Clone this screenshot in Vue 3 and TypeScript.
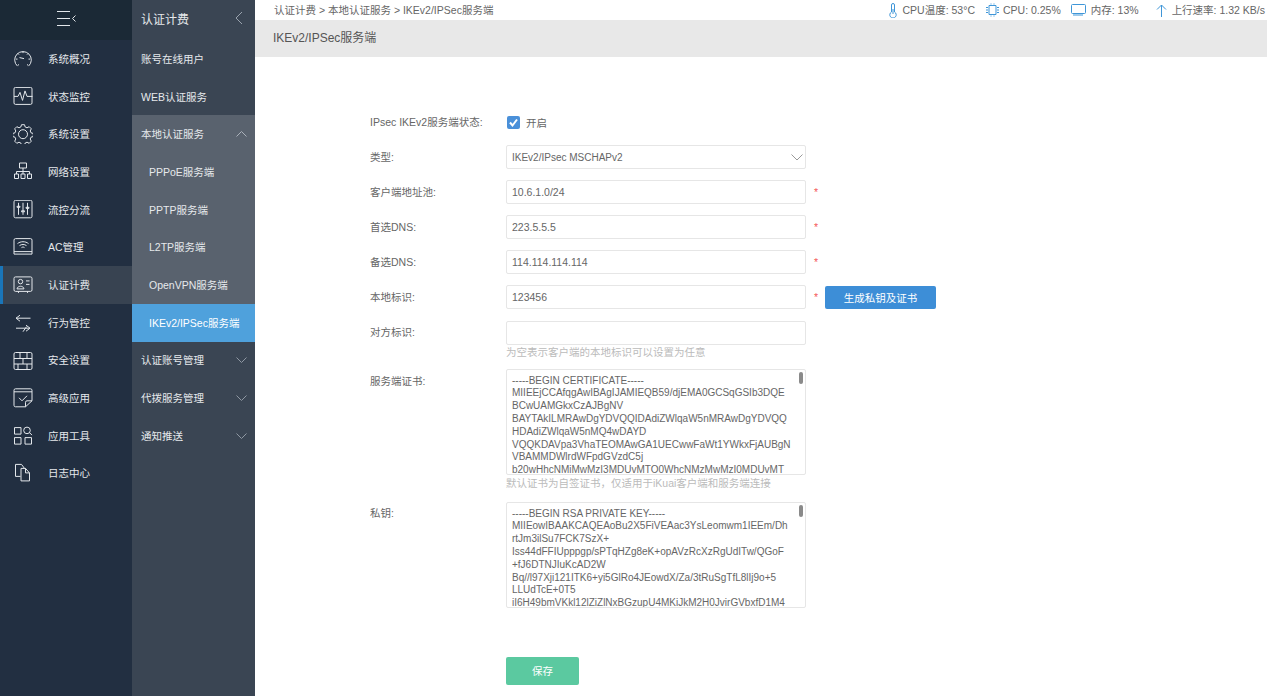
<script setup lang="ts">
interface RailItem { label: string; d: string }

const rail: RailItem[] = [
  { label: '系统概况', d: 'M17.500 66.500A8.300 8.300 0 1 1 28.500 66.500M16 59.500h1.500M28.500 59.500H30M23 52v1.500M18 54l1 1M28 54l-1 1M19.500 58l4.500 1M18 65.500l1-.5M28 65.500l-1-.5' },
  { label: '状态监控', d: 'M15.500 87.500h15a1.500 1.500 0 0 1 1.500 1.500v14a1.500 1.500 0 0 1-1.500 1.500h-15a1.500 1.500 0 0 1-1.500-1.500v-14a1.500 1.500 0 0 1 1.500-1.500zM14 96.500h4l2-4 2.500 8 2.500-9.500 2 5.500h5.500' },
  { label: '系统设置', d: 'M21.500 125.500h3l.7 2.300 1.800.8 2.200-1.100 2.100 2.100-1.100 2.200.8 1.800 2.300.7v3l-2.300.7-.8 1.800 1.100 2.200-2.100 2.100-2.200-1.100-1.800.8-.7 2.300h-3l-.7-2.300-1.800-.8-2.200 1.100-2.100-2.100 1.100-2.200-.8-1.800-2.300-.7v-3l2.300-.7.8-1.800-1.100-2.200 2.100-2.100 2.200 1.100 1.800-.8zM23 130.500a4.500 4.500 0 1 1 0 9a4.500 4.500 0 0 1 0-9z' },
  { label: '网络设置', d: 'M19.500 163.500h7v5h-7zM23 168.500v3.500M16.500 172h13M16.500 172v2.500M23 172v2.500M29.500 172v2.500M14.500 174.500h4v4.500h-4zM21 174.500h4v4.500h-4zM27.500 174.500h4v4.500h-4z' },
  { label: '流控分流', d: 'M15.500 200.500h15a1.500 1.500 0 0 1 1.500 1.500v14.500a1.500 1.500 0 0 1-1.500 1.500h-15a1.500 1.500 0 0 1-1.500-1.500V202a1.500 1.500 0 0 1 1.500-1.500zM18.500 203v12M23 203v12M27.500 203v12M17 206.500h3v1h-3zM21.500 211h3v1h-3zM26 207.500h3v1h-3z' },
  { label: 'AC管理', d: 'M15.500 239.500h15a1.500 1.500 0 0 1 1.500 1.500v14h-18v-14a1.500 1.500 0 0 1 1.500-1.500zM14 252.500h18M17.500 244.500c3-2.500 8-2.500 11 0M19.500 246.500c2-1.500 5-1.500 7 0M21.500 248.500c1-.7 2-.7 3 0' },
  { label: '认证计费', d: 'M15.500 277.500h15a1.500 1.500 0 0 1 1.500 1.500v11.500a1.500 1.500 0 0 1-1.500 1.500h-15a1.500 1.500 0 0 1-1.500-1.500V279a1.500 1.500 0 0 1 1.500-1.500zM20.500 280a2.200 2.200 0 1 1 0 4.400a2.200 2.200 0 0 1 0-4.400zM17 289.500c.5-3.500 6.500-3.500 7 0zM26 281.500h3.500M26 285h3.500M18.500 292v1.500M27.500 292v1.500' },
  { label: '行为管控', d: 'M20 315.500l-4 3 4 3M16 318.500h14.500M26 331.500l4-3-4-3M30 328.500H16M23 332l3.500-5' },
  { label: '安全设置', d: 'M15.500 353.500h15a1.500 1.500 0 0 1 1.500 1.500v14a1.500 1.500 0 0 1-1.500 1.500h-15a1.500 1.500 0 0 1-1.500-1.500v-14a1.500 1.500 0 0 1 1.500-1.500zM14 359.500h18M14 365h18M20 353.500v6M27 353.500v6M23 359.500v5.500M18 365v5.500M27 365v5.500' },
  { label: '高级应用', d: 'M25.500 407.500H15.500a1.500 1.500 0 0 1-1.500-1.500v-15a1.500 1.500 0 0 1 1.500-1.500h15a1.500 1.500 0 0 1 1.500 1.500v10.500zM14 392.500h18M25.500 407.500v-4.500a1.500 1.500 0 0 1 1.500-1.500h5M19 398.500l3 3 5-5' },
  { label: '应用工具', d: 'M14.500 428h6.500v6.500h-6.500zM14.500 438h6.500v6.500h-6.500zM25 438h6.500v6.500H25zM27 427.500a3.300 3.300 0 1 1 0 6.600a3.300 3.300 0 0 1 0-6.600zM29.500 433l2.500 2.500' },
  { label: '日志中心', d: 'M20.500 477.500h-5v-12h6l3 4M21 469.500h4.500l4 4.500v8h-8.500zM25.500 469.500v4.500h4' }
]

const certText = `-----BEGIN CERTIFICATE-----
MIIEEjCCAfqgAwIBAgIJAMIEQB59/djEMA0GCSqGSIb3DQE
BCwUAMGkxCzAJBgNV
BAYTAkILMRAwDgYDVQQIDAdiZWlqaW5nMRAwDgYDVQQ
HDAdiZWlqaW5nMQ4wDAYD
VQQKDAVpa3VhaTEOMAwGA1UECwwFaWt1YWkxFjAUBgN
VBAMMDWlrdWFpdGVzdC5j
b20wHhcNMiMwMzI3MDUvMTO0WhcNMzMwMzI0MDUvMT`

const keyText = `-----BEGIN RSA PRIVATE KEY-----
MIIEowIBAAKCAQEAoBu2X5FiVEAac3YsLeomwm1IEEm/Dh
rtJm3ilSu7FCK7SzX+
Iss44dFFIUpppgp/sPTqHZg8eK+opAVzRcXzRgUdITw/QGoF
+fJ6DTNJIuKcAD2W
Bq//l97Xji121ITK6+yi5GlRo4JEowdX/Za/3tRuSgTfL8lIj9o+5
LLUdTcE+0T5
iI6H49bmVKkl12lZiZlNxBGzupU4MKiJkM2H0JvirGVbxfD1M4`

const fields = [
  { label: '客户端地址池:', value: '10.6.1.0/24' },
  { label: '首选DNS:', value: '223.5.5.5' },
  { label: '备选DNS:', value: '114.114.114.114' }
]
</script>

<template>
  <div class="app">
    <nav class="rail">
      <div class="rail-head">
        <svg width="20" height="16" viewBox="0 0 20 16" fill="none" stroke="#e3e7eb">
          <path d="M0 1.500h13M0 8.500h13M0 15.500h13M18.500 5.500l-3 3 3 3" />
        </svg>
      </div>
      <div v-for="(item, i) in rail" :key="item.label" class="rail-item" :class="{ active: item.label === '认证计费' }">
        <svg class="rail-icon" width="20" height="20" :viewBox="`13 ${49.400 + i * 37.700} 20 20`" fill="none" stroke="#e3e7eb">
          <path :d="item.d" />
        </svg>
        <span class="lift">{{ item.label }}</span>
      </div>
    </nav>

    <aside class="panel">
      <div class="panel-head">
        <span>认证计费</span>
        <svg width="8" height="14" viewBox="0 0 8 14" fill="none" stroke="#9aa3ae"><path d="M7 1L1 7l6 6" /></svg>
      </div>
      <div class="panel-item"><span class="lift">账号在线用户</span></div>
      <div class="panel-item"><span class="lift">WEB认证服务</span></div>
      <div class="group">
        <div class="panel-item">
          <span class="lift">本地认证服务</span>
          <svg width="11" height="6" viewBox="0 0 11 6" fill="none" stroke="#aab1ba"><path d="M.500 5.500l5-5 5 5" /></svg>
        </div>
        <div class="panel-item sub"><span class="lift">PPPoE服务端</span></div>
        <div class="panel-item sub"><span class="lift">PPTP服务端</span></div>
        <div class="panel-item sub"><span class="lift">L2TP服务端</span></div>
        <div class="panel-item sub"><span class="lift">OpenVPN服务端</span></div>
        <div class="panel-item sub current"><span class="lift">IKEv2/IPSec服务端</span></div>
      </div>
      <div v-for="name in ['认证账号管理', '代拨服务管理', '通知推送']" :key="name" class="panel-item">
        <span class="lift">{{ name }}</span>
        <svg width="11" height="6" viewBox="0 0 11 6" fill="none" stroke="#8f98a3"><path d="M.500 .500l5 5 5-5" /></svg>
      </div>
    </aside>

    <main class="main">
      <header class="topbar">
        <span class="crumbs">认证计费 &gt; 本地认证服务 &gt; IKEv2/IPSec服务端</span>
        <div class="stats">
          <span class="stat">
            <svg width="10" height="15" viewBox="0 0 10 15" fill="none" stroke="#3f96d8"><path d="M3.500 9V2a1.500 1.500 0 0 1 3 0v7a3.200 3.200 0 1 1-3 0zM5 6v5" /></svg>
            CPU温度: 53°C
          </span>
          <span class="stat chip">
            <svg width="15" height="14" viewBox="0 0 15 14" fill="none" stroke="#3f96d8"><path d="M4 2.500h7v9H4zM1 4.500h2M1 7h2M1 9.500h2M12 4.500h2M12 7h2M12 9.500h2M6 .500v1M9 .500v1M6 12.500v1M9 12.500v1" /></svg>
            CPU: 0.25%
          </span>
          <span class="stat">
            <svg width="15" height="13" viewBox="0 0 15 13" fill="none" stroke="#3f96d8"><path d="M1.500 .500h12a1 1 0 0 1 1 1v7a1 1 0 0 1-1 1h-12a1 1 0 0 1-1-1v-7a1 1 0 0 1 1-1zM3 10v2M5 10v2M7 10v2M9 10v2M11 10v2" /></svg>
            内存: 13%
          </span>
          <span class="stat last">
            <svg width="11" height="13" viewBox="0 0 11 13" fill="none" stroke="#3f96d8"><path d="M5.500 13V1M1 5.500l4.500-4.500 4.500 4.500" /></svg>
            上行速率: 1.32 KB/s
          </span>
        </div>
      </header>
      <div class="title">IKEv2/IPSec服务端</div>

      <form class="form" @submit.prevent>
        <div class="row">
          <label>IPsec IKEv2服务端状态:</label>
          <div class="check">
            <span class="box">
              <svg width="13" height="13" viewBox="0 0 13 13" fill="none" stroke="#fff" stroke-width="2"><path d="M3 6.500l2.500 3L10 3.500" /></svg>
            </span>
            开启
          </div>
        </div>
        <div class="row">
          <label>类型:</label>
          <div class="select-wrap">
            <select class="input narrow">
              <option>IKEv2/IPsec MSCHAPv2</option>
            </select>
            <svg class="caret" width="12" height="7" viewBox="0 0 12 7" fill="none" stroke="#999"><path d="M.500 .500l5.500 5.500 5.500-5.500" /></svg>
          </div>
        </div>
        <div v-for="f in fields" :key="f.label" class="row">
          <label>{{ f.label }}</label>
          <input class="input" :value="f.value" />
          <span class="req">*</span>
        </div>
        <div class="row">
          <label>本地标识:</label>
          <input class="input" value="123456" />
          <span class="req">*</span>
          <button type="button" class="gen">生成私钥及证书</button>
        </div>
        <div class="row with-hint">
          <label>对方标识:</label>
          <div>
            <input class="input" />
            <p class="hint">为空表示客户端的本地标识可以设置为任意</p>
          </div>
        </div>
        <div class="row tall">
          <label>服务端证书:</label>
          <div>
            <div class="area-wrap">
              <textarea class="area" wrap="off" :value="certText"></textarea>
              <i class="thumb"></i>
            </div>
            <p class="hint hint-cert">默认证书为自签证书，仅适用于iKuai客户端和服务端连接</p>
          </div>
        </div>
        <div class="row tall key">
          <label>私钥:</label>
          <div class="area-wrap">
            <textarea class="area" wrap="off" :value="keyText"></textarea>
            <i class="thumb"></i>
          </div>
        </div>
        <button type="submit" class="save">保存</button>
      </form>
    </main>
  </div>
</template>

<style>
html, body { margin: 0; padding: 0; background: #fff; }
</style>

<style scoped>
.app {
  display: flex;
  height: 696px;
  overflow: hidden;
  font-family: "Liberation Sans", "Noto Sans CJK SC", sans-serif;
  font-size: 10.5px;
  color: #666;
}
.lift { margin-bottom: 1px; }
.rail {
  width: 132px;
  flex: none;
  background: #222f41;
  color: #e6e9ec;
}
.rail-head {
  height: 40px;
  background: #1b2936;
  display: flex;
  align-items: center;
  justify-content: center;
  padding: 0 0 4px 2px;
  box-sizing: border-box;
}
.rail-item {
  height: 37.7px;
  display: flex;
  align-items: center;
  padding-left: 13px;
  gap: 15px;
  box-sizing: border-box;
}
.rail-item.active {
  background: #384351;
  box-shadow: inset 3px 0 0 #1a76b9;
}
.rail-icon { flex: none; }
.panel {
  width: 123px;
  flex: none;
  background: #3a4553;
  color: #e6e9ec;
}
.panel-head {
  height: 40px;
  display: flex;
  align-items: center;
  justify-content: space-between;
  padding: 0 12px 4px 9px;
  box-sizing: border-box;
  font-size: 12px;
}
.panel-item {
  height: 37.7px;
  display: flex;
  align-items: center;
  justify-content: space-between;
  padding: 0 8px 0 9px;
}
.group { background: #59626e; }
.sub { padding-left: 17px; }
.current { background: #4fa1dc; color: #fff; }
.main {
  flex: 1;
  min-width: 0;
  background: #fff;
}
.topbar {
  height: 20px;
  display: flex;
  align-items: center;
  justify-content: space-between;
  padding: 0 2px 0 19px;
  line-height: 14px;
}
.stats { display: flex; gap: 10px; }
.stat {
  display: flex;
  align-items: center;
  gap: 5px;
}
.stat.chip { gap: 3px; }
.stat.last { margin-left: 7px; }
.title {
  height: 37px;
  line-height: 37px;
  background: #e8e8e8;
  padding-left: 18px;
  font-size: 12px;
  color: #555;
}
.form {
  padding: 53px 0 0 115px;
  display: flex;
  flex-direction: column;
  align-items: flex-start;
}
.row {
  display: flex;
  align-items: center;
  min-height: 24px;
  margin-bottom: 11.1px;
}
.row label {
  width: 136px;
  flex: none;
  margin-bottom: 2px;
}
.input {
  display: block;
  width: 300px;
  height: 24px;
  box-sizing: border-box;
  border: 1px solid #e6e6e6;
  border-radius: 2px;
  padding: 0 5px;
  background: #fff;
  color: #666;
  font: inherit;
  outline: none;
  appearance: none;
}
.narrow { font-size: 10px; }
.select-wrap { position: relative; }
.caret {
  position: absolute;
  right: 3px;
  top: 9px;
}
.req {
  color: #f45a5a;
  margin-left: 8px;
  width: 11px;
}
.gen {
  height: 23px;
  width: 111px;
  border: none;
  border-radius: 2px;
  background: #3d8ed7;
  color: #fff;
  font: inherit;
}
.check {
  display: flex;
  align-items: center;
  gap: 6px;
  margin-left: 1px;
}
.box {
  width: 13px;
  height: 13px;
  border-radius: 2px;
  background: #4a90d9;
  display: block;
}
.box svg { display: block; }
.with-hint { align-items: flex-start; margin-bottom: 9px; }
.with-hint label { line-height: 22px; }
.hint {
  margin: 0;
  color: #bbb;
  line-height: 15px;
}
.tall { align-items: flex-start; margin-bottom: 0; }
.tall label { padding-top: 4px; }
.hint-cert { padding-top: 1px; padding-bottom: 1px; }
.key { margin-top: 10px; }
.key label { padding-top: 3px; }
.area-wrap {
  position: relative;
  width: 300px;
  height: 106px;
}
.area {
  display: block;
  width: 300px;
  height: 106px;
  box-sizing: border-box;
  border: 1px solid #e6e6e6;
  border-radius: 2px;
  padding: 5px;
  margin: 0;
  resize: none;
  overflow: hidden;
  font: inherit;
  font-size: 10px;
  line-height: 12.8px;
  color: #666;
  outline: none;
  background: #fff;
}
.thumb {
  position: absolute;
  right: 3px;
  top: 3px;
  width: 4px;
  height: 12px;
  border-radius: 2px;
  background: #8a8a8a;
}
.save {
  margin: 49px 0 0 136px;
  width: 73px;
  height: 28px;
  border: none;
  border-radius: 2px;
  background: #5bc9a0;
  color: #fff;
  font: inherit;
}
</style>
